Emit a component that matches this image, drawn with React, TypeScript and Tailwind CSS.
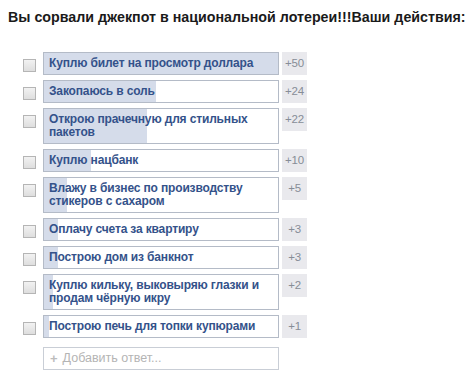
import React from 'react';

interface Answer {
  text: string;
  votes: number;
}

const ANSWERS: Answer[] = [
  { text: 'Куплю билет на просмотр доллара', votes: 50 },
  { text: 'Закопаюсь в соль', votes: 24 },
  { text: 'Открою прачечную для стильных пакетов', votes: 22 },
  { text: 'Куплю нацбанк', votes: 10 },
  { text: 'Влажу в бизнес по производству стикеров с сахаром', votes: 5 },
  { text: 'Оплачу счета за квартиру', votes: 3 },
  { text: 'Построю дом из банкнот', votes: 3 },
  { text: 'Куплю кильку, выковыряю глазки и продам чёрную икру', votes: 2 },
  { text: 'Построю печь для топки купюрами', votes: 1 },
];

const MAX = Math.max(...ANSWERS.map(a => a.votes));

const PollRow: React.FC<{ item: Answer }> = ({ item }) => {
  const pct = (item.votes / MAX) * 100;
  return (
    <div className="flex items-start">
      {/* checkbox */}
      <div className="w-[43px] shrink-0 flex justify-start pl-[23px] pt-[7px]">
        <div className="w-[13px] h-[13px] border border-[#b5b5b5] bg-gradient-to-b from-[#f2f2f2] to-[#dedede]" />
      </div>
      <div className="relative w-[236px] shrink-0 border border-[#b4bbc7] bg-white">
        <div className="absolute left-0 top-0 bottom-0 bg-[#d5dcea]" style={{ width: `${pct}%` }} />
        <div className="relative px-[5px] py-[4px] text-[12px] leading-[13px] font-bold tracking-[-0.15px] text-[#34528a]">
          {item.text}
        </div>
      </div>
      <div className="ml-[3px] w-[25px] h-[23px] shrink-0 bg-[#e9e9ed] text-[#878d97] text-[11.5px] tracking-[-0.2px] flex items-center justify-center">
        +{item.votes}
      </div>
    </div>
  );
};

export default function App() {
  return (
    <div className="w-[470px] h-[379px] bg-white pl-[8px] pt-[9px]" style={{ fontFamily: '"Liberation Sans", Arial, sans-serif' }}>
      <h1 className="text-[14.25px] leading-[17px] font-bold text-[#1a1a1a] whitespace-nowrap">
        Вы сорвали джекпот в национальной лотереи!!!Ваши действия:
      </h1>
      <div className="-ml-[8px] mt-[26px] flex flex-col gap-[5px]">
        {ANSWERS.map((a, i) => (
          <PollRow key={i} item={a} />
        ))}
        <div className="flex mt-[4px]">
          <div className="w-[43px] shrink-0" />
          <div className="w-[236px] h-[23px] border border-[#c9ced6] flex items-center pl-[6px] text-[12.5px] text-[#b4b4b4]">
            <span className="mr-[5px] text-[#bcbcbc] font-extrabold text-[13px] leading-none">+</span>Добавить ответ...
          </div>
        </div>
      </div>
    </div>
  );
}
